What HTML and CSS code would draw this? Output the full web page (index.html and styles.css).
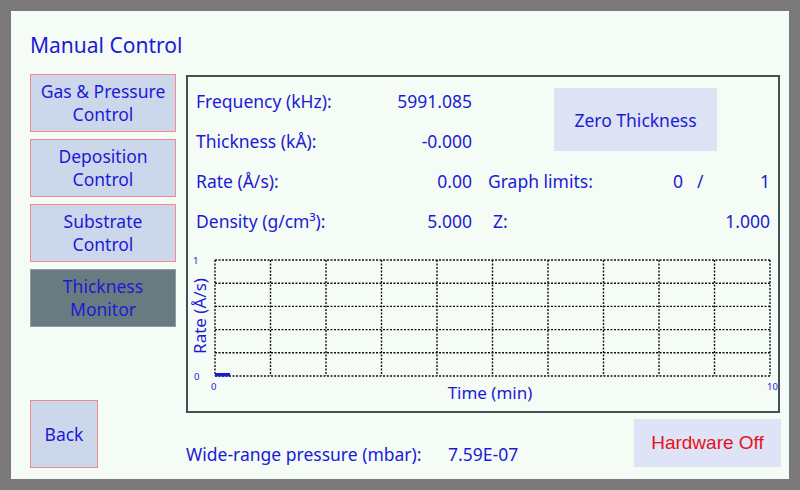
FILE: index.html
```html
<!DOCTYPE html>
<html lang="en">
<head>
    <meta charset="UTF-8">
    <title>Manual Control</title>
    <link rel="stylesheet" href="styles.css">
</head>
<body>
    <div class="screen">
        <div class="title">Manual Control</div>
        <div class="body">
            <div class="side">
                <button class="nav-btn">Gas &amp; Pressure<br>Control</button>
                <button class="nav-btn">Deposition<br>Control</button>
                <button class="nav-btn">Substrate<br>Control</button>
                <button class="nav-btn active">Thickness<br>Monitor</button>
                <button class="back-btn">Back</button>
            </div>
            <div class="main">
                <div class="panel">
                    <div class="readouts">
                        <div class="label">Frequency (kHz):</div>
                        <div class="value">5991.085</div>
                        <div class="zero-cell"><button class="zero-btn">Zero Thickness</button></div>
                        <div class="label">Thickness (kÅ):</div>
                        <div class="value">-0.000</div>
                        <div class="label">Rate (Å/s):</div>
                        <div class="value">0.00</div>
                        <div class="limits">
                            <span class="limits-label">Graph limits:</span>
                            <span class="limits-min">0</span>
                            <span class="limits-sep">/</span>
                            <span class="limits-max">1</span>
                        </div>
                        <div class="label">Density (g/cm³):</div>
                        <div class="value">5.000</div>
                        <div class="zrow">
                            <span class="z-label">Z:</span>
                            <span class="z-value">1.000</span>
                        </div>
                    </div>
                    <svg class="graph" width="590" height="170" viewBox="0 0 590 170">
                        <g class="grid">
                            <line x1="27" y1="19" x2="582" y2="19"/>
                            <line x1="27" y1="42.2" x2="582" y2="42.2"/>
                            <line x1="27" y1="65.4" x2="582" y2="65.4"/>
                            <line x1="27" y1="88.6" x2="582" y2="88.6"/>
                            <line x1="27" y1="111.8" x2="582" y2="111.8"/>
                            <line x1="27" y1="135" x2="582" y2="135"/>
                            <line x1="27" y1="19" x2="27" y2="135"/>
                            <line x1="82.5" y1="19" x2="82.5" y2="135"/>
                            <line x1="138" y1="19" x2="138" y2="135"/>
                            <line x1="193.5" y1="19" x2="193.5" y2="135"/>
                            <line x1="249" y1="19" x2="249" y2="135"/>
                            <line x1="304.5" y1="19" x2="304.5" y2="135"/>
                            <line x1="360" y1="19" x2="360" y2="135"/>
                            <line x1="415.5" y1="19" x2="415.5" y2="135"/>
                            <line x1="471" y1="19" x2="471" y2="135"/>
                            <line x1="526.5" y1="19" x2="526.5" y2="135"/>
                            <line x1="582" y1="19" x2="582" y2="135"/>
                        </g>
                        <rect class="trace" x="27" y="132" width="15" height="3.5"/>
                        <text class="tick" x="5" y="23">1</text>
                        <text class="tick" x="6" y="139">0</text>
                        <text class="tick" x="23" y="149">0</text>
                        <text class="tick" x="579" y="149">10</text>
                        <text class="axis" x="302" y="158" text-anchor="middle">Time (min)</text>
                        <text class="axis" transform="translate(18 75) rotate(-90)" text-anchor="middle">Rate (Å/s)</text>
                    </svg>
                </div>
                <div class="footer">
                    <div class="pressure">
                        <span class="pressure-label">Wide-range pressure (mbar):</span>
                        <span class="pressure-value">7.59E-07</span>
                    </div>
                    <button class="hw-btn">Hardware Off</button>
                </div>
            </div>
        </div>
    </div>
</body>
</html>
```

FILE: styles.css
```css
body {
    margin: 0;
    background: #7a7a7a;
    font-family: "Noto Sans", "DejaVu Sans", sans-serif;
    color: #1b1bd6;
}
.screen {
    margin: 11px;
    height: 468px;
    box-sizing: border-box;
    padding: 0 9px 11px 19px;
    background: #f5fbf5;
    display: flex;
    flex-direction: column;
}
.title {
    height: 63px;
    box-sizing: border-box;
    padding-top: 20px;
    font-size: 21px;
    line-height: 28px;
}
.body {
    flex: 1;
    display: flex;
    gap: 10px;
}
.side {
    width: 146px;
    flex-shrink: 0;
    display: flex;
    flex-direction: column;
    gap: 7px;
}
button {
    font-family: inherit;
    color: inherit;
    padding: 0;
    cursor: pointer;
}
.nav-btn {
    height: 58px;
    background: #cdd7ec;
    border: 1px solid #f28a8e;
    font-size: 17.5px;
    line-height: 23px;
}
.nav-btn.active {
    background: #687b81;
    border-color: #8c9ea3;
}
.back-btn {
    margin-top: auto;
    width: 68px;
    height: 68px;
    background: #cdd7ec;
    border: 1px solid #f28a8e;
    font-size: 17.5px;
}
.main {
    flex: 1;
    min-width: 0;
    display: flex;
    flex-direction: column;
}
.panel {
    margin-top: 1px;
    height: 338px;
    box-sizing: border-box;
    border: 2px solid #3d5358;
}
.readouts {
    display: grid;
    grid-template-columns: 150px 126px 1fr;
    grid-template-rows: repeat(4, 40px);
    padding: 4px 8px 0 8px;
    font-size: 17.5px;
    line-height: 40px;
}
.value {
    text-align: right;
}
.zero-cell {
    grid-row: span 2;
    padding-left: 16px;
}
.zero-btn {
    margin: 7px 0 0 66px;
    width: 163px;
    height: 63px;
    background: #dde2f5;
    border: none;
    font-size: 17.5px;
}
.limits {
    display: flex;
    padding-left: 16px;
}
.limits-label {
    width: 170px;
}
.limits-min {
    width: 25px;
    text-align: right;
}
.limits-sep {
    margin-left: 14px;
}
.limits-max {
    flex: 1;
    text-align: right;
}
.zrow {
    display: flex;
    justify-content: space-between;
    padding-left: 21px;
}
.graph {
    display: block;
}
.grid line {
    stroke: #111;
    stroke-width: 1.4;
    stroke-dasharray: 2 1.5;
}
.trace {
    fill: #1b1bd6;
}
.graph text {
    fill: #1b1bd6;
    font-family: "Noto Sans", "DejaVu Sans", sans-serif;
}
.tick {
    font-size: 9.5px;
}
.axis {
    font-size: 17px;
}
.footer {
    flex: 1;
    display: flex;
    justify-content: space-between;
    align-items: flex-end;
}
.pressure {
    margin-bottom: 4px;
    font-size: 17.5px;
    line-height: 20px;
}
.pressure-label {
    margin-right: 22px;
}
.hw-btn {
    width: 147px;
    height: 48px;
    margin: 0 -1px 1px 0;
    background: #dfe3f7;
    border: none;
    color: #e3141b;
    font-family: "Liberation Sans", Arial, sans-serif;
    font-size: 19px;
}
```
